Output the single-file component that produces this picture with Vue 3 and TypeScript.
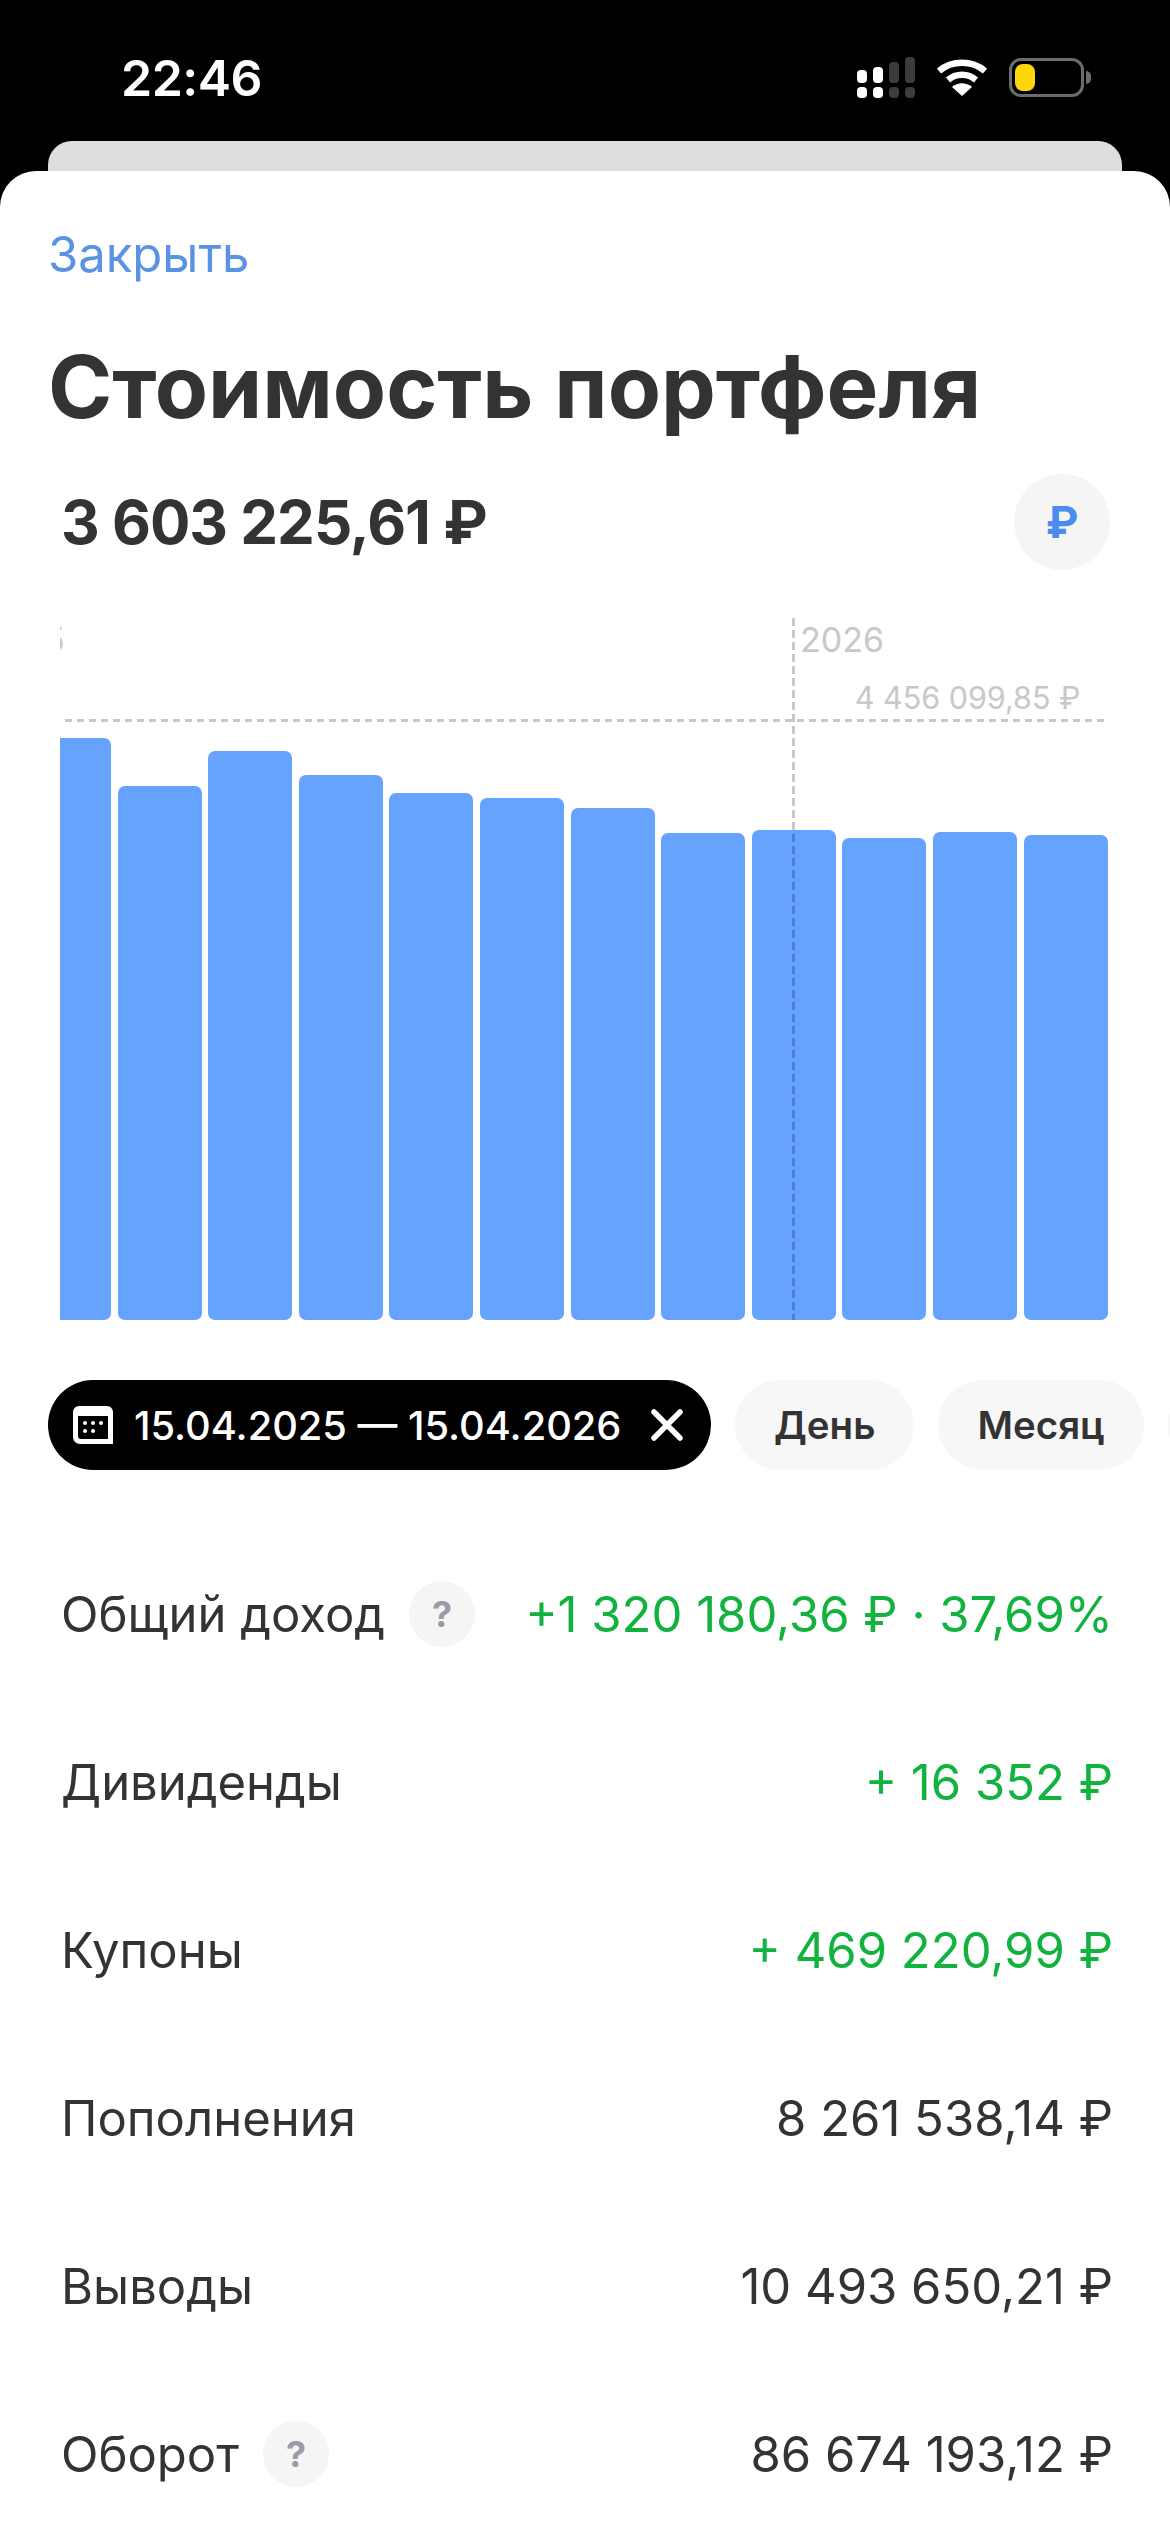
<script setup lang="ts">
interface Row {
  label: string
  value: string
  hint?: boolean
  green?: boolean
}

const barTops = [738, 786, 751, 775, 793, 798, 808, 833, 830, 838, 832, 835]
const chartBottom = 1320
const chartTop = 618

const bars = barTops.map((top) => chartBottom - top)

const rows: Row[] = [
  { label: 'Общий доход', value: '+1 320 180,36 ₽ · 37,69%', hint: true, green: true },
  { label: 'Дивиденды', value: '+ 16 352 ₽', green: true },
  { label: 'Купоны', value: '+ 469 220,99 ₽', green: true },
  { label: 'Пополнения', value: '8 261 538,14 ₽' },
  { label: 'Выводы', value: '10 493 650,21 ₽' },
  { label: 'Оборот', value: '86 674 193,12 ₽', hint: true }
]

const chartHeight = chartBottom - chartTop
</script>

<template>
  <div class="Screen">
    <div class="status">
      <span class="time">22:46</span>
      <div class="status-icons">
        <svg class="signal" width="58" height="41" viewBox="0 0 58 41">
          <rect x="0" y="13" width="10" height="13" rx="4" fill="#fff" />
          <rect x="16" y="10" width="10" height="16" rx="4" fill="#fff" />
          <rect x="32" y="5" width="10" height="21" rx="4" fill="#3c3c3c" />
          <rect x="48" y="0" width="10" height="26" rx="4" fill="#3c3c3c" />
          <rect x="0" y="30" width="10" height="11" rx="4" fill="#fff" />
          <rect x="16" y="30" width="10" height="11" rx="4" fill="#fff" />
          <rect x="32" y="30" width="10" height="11" rx="4" fill="#3c3c3c" />
          <rect x="48" y="30" width="10" height="11" rx="4" fill="#3c3c3c" />
        </svg>
        <svg class="wifi" width="50" height="37" viewBox="0 0 50 37">
          <path d="M2 12 C15 1 35 1 48 12" fill="none" stroke="#fff" stroke-width="6.5" />
          <path d="M11 21 C19 14 31 14 39 21" fill="none" stroke="#fff" stroke-width="6.5" />
          <path d="M15 28 C21 23 29 23 35 28 L25 37 Z" fill="#fff" />
        </svg>
        <div class="battery">
          <div class="battery-fill"></div>
          <div class="battery-cap"></div>
        </div>
      </div>
    </div>

    <div class="peek"></div>

    <div class="sheet">
      <div class="close">Закрыть</div>
      <h1 class="title">Стоимость портфеля</h1>

      <div class="total">
        <span class="amount">3 603 225,61 ₽</span>
        <span class="currency">₽</span>
      </div>

      <div class="chart" :style="{ height: chartHeight + 'px' }">
        <div class="bars">
          <div v-for="(h, i) in bars" :key="i" class="bar" :style="{ height: h + 'px' }"></div>
        </div>
        <span class="year-cut">5</span>
        <span class="year">2026</span>
        <span class="max">4 456 099,85 ₽</span>
        <div class="line-h"></div>
        <div class="line-v"></div>
      </div>

      <div class="chips">
        <div class="chip chip-date">
          <svg width="40" height="38" viewBox="0 0 40 38">
            <path d="M6 0 H34 A6 6 0 0 1 40 6 V38 H7 A7 7 0 0 1 0 31 V6 A6 6 0 0 1 6 0 Z M5 10 V30 A3 3 0 0 0 8 33 H35 V10 Z" fill="#fff" fill-rule="evenodd" />
            <circle cx="12" cy="17" r="2" fill="#fff" />
            <circle cx="20" cy="17" r="2" fill="#fff" />
            <circle cx="28" cy="17" r="2" fill="#fff" />
            <circle cx="12" cy="25" r="2" fill="#fff" />
            <circle cx="20" cy="25" r="2" fill="#fff" />
          </svg>
          <span class="date-text">15.04.2025 — 15.04.2026</span>
          <svg width="32" height="32" viewBox="0 0 32 32">
            <path d="M3 3 L29 29 M29 3 L3 29" stroke="#fff" stroke-width="5.5" stroke-linecap="round" />
          </svg>
        </div>
        <div class="chip">День</div>
        <div class="chip">Месяц</div>
        <div class="chip">Год</div>
      </div>

      <div class="rows">
        <div v-for="row in rows" :key="row.label" class="row">
          <div class="row-label">
            <span>{{ row.label }}</span>
            <span v-if="row.hint" class="hint">?</span>
          </div>
          <span class="row-value" :class="{ '--green': row.green }">{{ row.value }}</span>
        </div>
      </div>
    </div>
  </div>
</template>

<style>
html,
body {
  margin: 0;
  background: #000;
}
</style>

<style scoped>
.Screen {
  width: 1170px;
  height: 2532px;
  overflow: hidden;
  background: #000;
  font-family: Inter, 'Noto Sans', sans-serif;
  color: #333;
}

/** status bar */
.status {
  height: 141px;
  box-sizing: border-box;
  padding: 50px 86px 0 121px;
  display: flex;
  justify-content: space-between;
  align-items: flex-start;
}
.time {
  color: #fff;
  font-size: 50px;
  font-weight: 600;
  line-height: 56px;
  letter-spacing: -0.5px;
}
.status-icons {
  display: flex;
  align-items: center;
  gap: 22px;
  padding-top: 7px;
}
.battery {
  position: relative;
  width: 75px;
  height: 39px;
  box-sizing: border-box;
  border: 3px solid #6c6c6c;
  border-radius: 12px;
  padding: 3px;
}
.battery-fill {
  width: 20px;
  height: 100%;
  background: #ffd60a;
  border-radius: 8px;
}
.battery-cap {
  position: absolute;
  right: -10px;
  top: 10px;
  width: 5px;
  height: 13px;
  background: #6c6c6c;
  border-radius: 0 5px 5px 0;
}

/** sheets */
.peek {
  height: 30px;
  margin: 0 48px;
  background: #dedede;
  border-radius: 24px 24px 0 0;
}
.sheet {
  height: 2361px;
  background: #fff;
  border-radius: 36px 36px 0 0;
  overflow: hidden;
}

/** header */
.close {
  margin: 52px 48px 0;
  font-size: 49px;
  line-height: 64px;
  color: #5a92e4;
}
.title {
  margin: 50px 48px 0;
  font-size: 87px;
  line-height: 100px;
  font-weight: 700;
  color: #333;
  white-space: nowrap;
}
.total {
  margin: 37px 60px 0 61px;
  height: 96px;
  display: flex;
  justify-content: space-between;
  align-items: center;
}
.amount {
  font-size: 60px;
  font-weight: 700;
  letter-spacing: -1px;
}
.currency {
  width: 96px;
  height: 96px;
  border-radius: 50%;
  background: #f5f5f6;
  color: #4a8cf0;
  font-size: 44px;
  font-weight: 700;
  display: flex;
  align-items: center;
  justify-content: center;
}

/** chart */
.chart {
  position: relative;
  margin: 48px 62.5px 0 60px;
  overflow: hidden;
}
.bars {
  position: absolute;
  inset: 0;
  display: flex;
  justify-content: flex-end;
  align-items: flex-end;
  gap: 6.6px;
}
.bar {
  flex: 0 0 84px;
  background: #66a3ff;
  border-radius: 7px;
}
.year,
.year-cut,
.max {
  position: absolute;
  color: #c8c8c8;
  line-height: 1;
  white-space: nowrap;
}
.year {
  left: 740px;
  top: 5px;
  font-size: 34px;
}
.year-cut {
  left: -16px;
  top: 5px;
  font-size: 34px;
}
.max {
  right: 27px;
  top: 65px;
  font-size: 30.5px;
}
.line-h {
  position: absolute;
  left: 5px;
  right: 0;
  top: 101px;
  height: 3px;
  background: repeating-linear-gradient(to right, #c8c8c8 0 7px, transparent 7px 12px);
}
.line-v {
  position: absolute;
  left: 732px;
  top: 0;
  bottom: 0;
  width: 3px;
  background: repeating-linear-gradient(to bottom, rgba(0, 0, 60, 0.22) 0 8px, transparent 8px 12px);
}

/** chips */
.chips {
  margin-top: 60px;
  padding-left: 48px;
  display: flex;
  gap: 24px;
  height: 90px;
}
.chip {
  flex: 0 0 auto;
  height: 90px;
  box-sizing: border-box;
  padding: 0 39px;
  border-radius: 45px;
  background: #f7f7f7;
  font-size: 38.5px;
  font-weight: 600;
  display: flex;
  align-items: center;
}
.chip-date {
  width: 663px;
  padding: 0 28px 0 25px;
  background: #000;
  color: #fff;
  justify-content: flex-start;
  gap: 21px;
}
.chip-date svg:last-child {
  margin-left: auto;
}
.date-text {
  font-size: 39.8px;
  font-weight: 500;
  white-space: nowrap;
}

/** rows */
.rows {
  margin-top: 60px;
  padding: 0 57px 0 61px;
}
.row {
  height: 168px;
  display: flex;
  justify-content: space-between;
  align-items: center;
  font-size: 49px;
}
.row-label {
  display: flex;
  align-items: center;
  gap: 24px;
}
.hint {
  width: 66px;
  height: 66px;
  border-radius: 50%;
  background: #f5f5f6;
  color: #9a9ca5;
  font-size: 36px;
  font-weight: 700;
  display: flex;
  align-items: center;
  justify-content: center;
}
.row-value.--green {
  color: #12b23f;
}
</style>
